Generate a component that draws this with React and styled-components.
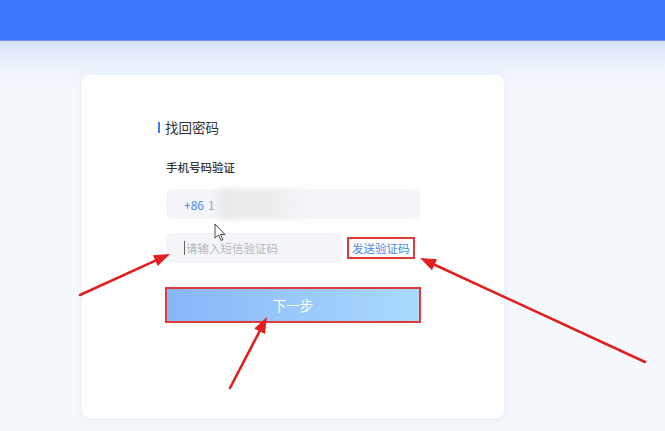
import React from 'react';
import styled, { createGlobalStyle } from 'styled-components';

const GlobalStyle = createGlobalStyle`
	html, body { margin: 0; padding: 0; }
	body {
		font-family: "Noto Sans CJK SC", "Noto Sans", sans-serif;
		background: #f5f8fd;
	}
`;

const Page = styled.div`
	position: relative;
	width: 665px; height: 431px;
	overflow: hidden;
	background: #f5f8fd;
`;

const Header = styled.div`
	height: 40px;
	background: #3c78fc;
	border-bottom: 1px solid #6d93e4;
`;

const Body = styled.div`
	height: 390px;
	padding: 34px 0 0 82px;
	box-sizing: border-box;
	background: linear-gradient(to bottom, #d3e0f4 0px, #e3ecf9 12px, #edf3fc 28px, #f5f8fd 48px);
`;

const Card = styled.div`
	width: 422px; height: 343px;
	box-sizing: border-box;
	background: #fff;
	border-radius: 8px;
	box-shadow: 0 2px 10px rgba(150, 175, 215, 0.12);
	padding: 43px 0 0 84px;
`;

const Title = styled.div`
	display: flex; align-items: center;
	margin-left: -8px;
	font-size: 13.5px;
	color: #333;
	height: 18px;
	&::before {
		content: '';
		width: 2px; height: 11px;
		background: #3c78fc;
		margin-right: 5px;
	}
`;

const Label = styled.div`
	margin-top: 23px;
	font-size: 11.5px;
	font-weight: 500;
	color: #333;
	height: 16px;
`;

const Field = styled.div`
	display: flex; align-items: center;
	width: ${p => p.$w}px; height: 30px;
	margin-top: ${p => p.$mt}px;
	box-sizing: border-box;
	padding-left: 18px;
	background: #f3f5f8;
	border-radius: 6px;
	font-size: 12px;
`;

const Code = styled.span`
	color: #4a86e8;
`;

const Digit = styled.span`
	color: #9aa3b0;
	margin-left: 4px;
`;

const Blur = styled.span`
	width: 90px; height: 30px;
	margin-left: 2px;
	background: linear-gradient(to right, #e9eaec 0%, #ececee 60%, #f3f5f8 100%);
	filter: blur(3px);
`;

const CodeRow = styled.div`
	display: flex; align-items: center;
	margin-top: 14px;
`;

const Placeholder = styled.span`
	color: #b3b8c0;
	font-size: 11.5px;
	border-left: 1.5px solid #666;
	padding-left: 1px;
	line-height: 14px;
`;

const SendLink = styled.span`
	margin-left: 4px;
	padding: 2px 3px;
	border: 2px solid #e03a3a;
	color: #4a86e8;
	font-size: 11.5px;
	line-height: 14px;
`;

const NextButton = styled.div`
	margin: 24px 0 0 -1px;
	width: 256px; height: 36px;
	box-sizing: border-box;
	border: 2px solid #e03a3a;
	background: linear-gradient(to right, #88b5f8, #a9dafd);
	color: #fff;
	font-size: 13.5px;
	display: flex; align-items: center; justify-content: center;
`;

const Overlay = styled.svg`
	position: absolute; top: 0; left: 0;
	pointer-events: none;
`;

const Arrow = ({ x1, y1, x2, y2 }) => {
	const a = Math.atan2(y2 - y1, x2 - x1);
	const len = 16, w = 6;
	const bx = x2 - len * Math.cos(a), by = y2 - len * Math.sin(a);
	const px = -Math.sin(a) * w, py = Math.cos(a) * w;
	return (
		<g>
			<line x1={x1} y1={y1} x2={bx} y2={by} stroke="#e0201e" strokeWidth="2.6" strokeLinecap="round" />
			<polygon points={`${x2},${y2} ${bx + px},${by + py} ${bx - px},${by - py}`} fill="#e0201e" />
		</g>
	);
};

const App = () => (
	<Page>
		<GlobalStyle />
		<Header />
		<Body>
			<Card>
				<Title>找回密码</Title>
				<Label>手机号码验证</Label>
				<Field $w={254} $mt={14}>
					<Code>+86</Code>
					<Digit>1</Digit>
					<Blur />
				</Field>
				<CodeRow>
					<Field $w={177} $mt={0}>
						<Placeholder>请输入短信验证码</Placeholder>
					</Field>
					<SendLink>发送验证码</SendLink>
				</CodeRow>
				<NextButton>下一步</NextButton>
			</Card>
		</Body>
		<Overlay width="665" height="431">
			<Arrow x1={80} y1={295} x2={170} y2={254} />
			<Arrow x1={645} y1={362} x2={420} y2={258} />
			<Arrow x1={230} y1={388} x2={267} y2={317} />
			<path d="M215 224 L215 238 L218.5 235 L221 240.5 L223 239.5 L220.5 234.5 L225 234.5 Z" fill="#fff" stroke="#333" strokeWidth="0.9" strokeLinejoin="round" />
		</Overlay>
	</Page>
);

export default App;
